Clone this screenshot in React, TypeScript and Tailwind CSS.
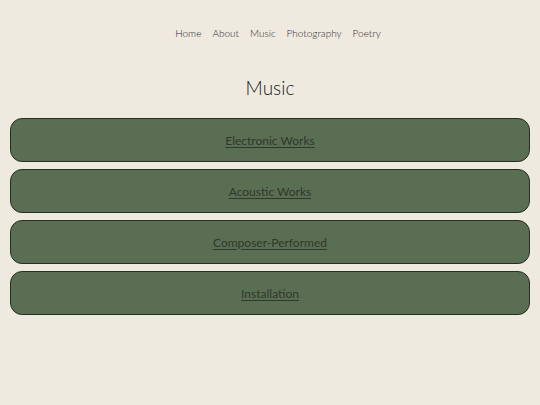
import React from "react";

const links = ["Home", "About", "Music", "Photography", "Poetry"];
const items = ["Electronic Works", "Acoustic Works", "Composer-Performed", "Installation"];

export default function App() {
  return (
    <div className="min-h-[405px] w-full bg-[#efeae0] px-[10px] text-[#2a2a2a]" style={{ fontFamily: "Lato, 'Open Sans', sans-serif" }}>
      <nav className="flex justify-center gap-[11px] pl-[16px] pt-[26px] text-[10px] font-light leading-[14px] text-[#2e2e2e]">
        {links.map((l) => (
          <a key={l} href="#" className="no-underline">{l}</a>
        ))}
      </nav>
      <h1 className="mt-[36px] text-center text-[19px] font-light leading-[24px] text-[#1a1a1a]">Music</h1>
      <div className="mt-[18px] flex flex-col gap-[7px]">
        {items.map((it) => (
          <div key={it} className="flex h-[44px] items-center justify-center rounded-[12px] border-[1.5px] border-[#263022] bg-[#5a6e53] pt-[1px]">
            <a href="#" className="text-[12px] text-[#2f382c] underline underline-offset-2">{it}</a>
          </div>
        ))}
      </div>
    </div>
  );
}
